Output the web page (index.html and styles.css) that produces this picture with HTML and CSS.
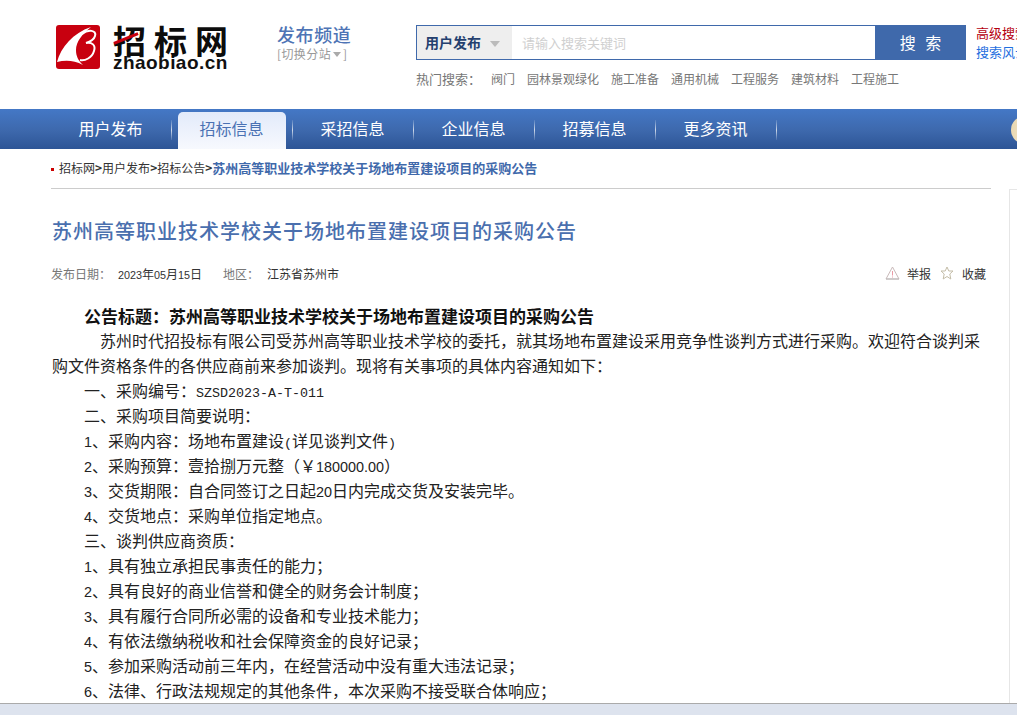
FILE: index.html
```html
<!DOCTYPE html>
<html lang="zh-CN">
<head>
<meta charset="UTF-8">
<title>苏州高等职业技术学校关于场地布置建设项目的采购公告</title>
<link rel="stylesheet" href="styles.css">
</head>
<body>
<div class="page">
  <header class="top">
    <div class="logo">
      <svg class="logoMark" width="44" height="44" viewBox="0 0 44 44">
        <rect width="44" height="44" rx="3" fill="#c8000f"/>
        <path d="M1 37C5 22 17 8 35 2C26 9 20 17 20 25C20 31 22 35 27 40C18 35 9 35 1 37Z" fill="#fff"/>
        <path d="M26 9C32 4 41 5 39 11C38 15 33 17 30 18C36 17 40 20 38 26C36 33 29 36 24 35" fill="none" stroke="#fff" stroke-width="2"/>
      </svg>
      <div class="logoText">
        <div class="logoCn">招标网<i class="logoSlash"></i></div>
        <div class="logoEn">zhaobiao.cn</div>
      </div>
    </div>
    <div class="channel">
      <div class="channelName">发布频道</div>
      <div class="channelSwitch">[切换分站<i class="arrow"></i>]</div>
    </div>
    <div class="searchCol">
      <div class="searchBox">
        <div class="searchType">用户发布<i class="arrow typeArrow"></i></div>
        <div class="searchInput">请输入搜索关键词</div>
        <div class="searchBtn">搜 索</div>
      </div>
      <div class="hot">
        <span class="hotLabel">热门搜索：</span>
        <a>阀门</a><a>园林景观绿化</a><a>施工准备</a><a>通用机械</a><a>工程服务</a><a>建筑材料</a><a>工程施工</a>
      </div>
    </div>
    <div class="advLinks">
      <a class="advRed">高级搜索</a>
      <a class="advBlue">搜索风云</a>
    </div>
  </header>

  <nav class="nav">
    <a class="navItem">用户发布</a>
    <a class="navItem active">招标信息</a>
    <a class="navItem">采招信息</a>
    <a class="navItem">企业信息</a>
    <a class="navItem">招募信息</a>
    <a class="navItem">更多资讯</a>
    <i class="navBall"></i>
  </nav>

  <div class="mainWrap">
    <main class="main">
      <div class="crumb">
        <i class="crumbDot"></i>招标网<em>&gt;</em>用户发布<em>&gt;</em>招标公告<em>&gt;</em><b>苏州高等职业技术学校关于场地布置建设项目的采购公告</b>
      </div>
      <h1 class="title">苏州高等职业技术学校关于场地布置建设项目的采购公告</h1>
      <div class="meta">
        <span class="metaLabel">发布日期：</span><span class="metaDate"><span class="numSm">2023</span>年<span class="numSm">05</span>月<span class="numSm">15</span>日</span>
        <span class="metaLabel metaArea">地区：</span><span class="metaCity">江苏省苏州市</span>
        <span class="tools">
          <svg width="15" height="14" viewBox="0 0 15 14"><path d="M7.500 1L14 13H1Z" fill="#fff" stroke="#c9b9b9"/><path d="M7.500 5V9.500M7.500 10.500V11.500" stroke="#eb9ba5"/><path d="M1 13H14" stroke="#bbb"/></svg>
          <a class="toolReport">举报</a>
          <svg width="14" height="14" viewBox="0 0 14 14"><path d="M7 1L8.800 5H13L9.800 8L10.800 13L7 10.500L3.200 13L4.200 8L1 5H5.200Z" fill="#fff" stroke="#c4bda8"/></svg>
          <a class="toolFav">收藏</a>
        </span>
      </div>
      <article class="article">
        <p class="line subject">公告标题：苏州高等职业技术学校关于场地布置建设项目的采购公告</p>
        <p class="line intro">苏州时代招投标有限公司受苏州高等职业技术学校的委托，就其场地布置建设采用竞争性谈判方式进行采购。欢迎符合谈判采购文件资格条件的各供应商前来参加谈判。现将有关事项的具体内容通知如下：</p>
        <p class="line">一、采购编号：<span class="mono">SZSD2023-A-T-011</span></p>
        <p class="line">二、采购项目简要说明：</p>
        <p class="line"><span class="num">1</span>、采购内容：场地布置建设<span class="mono">(</span>详见谈判文件<span class="mono">)</span></p>
        <p class="line"><span class="num">2</span>、采购预算：壹拾捌万元整（￥<span class="num">180000.00</span>）</p>
        <p class="line"><span class="num">3</span>、交货期限：自合同签订之日起<span class="num">20</span>日内完成交货及安装完毕。</p>
        <p class="line"><span class="num">4</span>、交货地点：采购单位指定地点。</p>
        <p class="line">三、谈判供应商资质：</p>
        <p class="line"><span class="num">1</span>、具有独立承担民事责任的能力；</p>
        <p class="line"><span class="num">2</span>、具有良好的商业信誉和健全的财务会计制度；</p>
        <p class="line"><span class="num">3</span>、具有履行合同所必需的设备和专业技术能力；</p>
        <p class="line"><span class="num">4</span>、有依法缴纳税收和社会保障资金的良好记录；</p>
        <p class="line"><span class="num">5</span>、参加采购活动前三年内，在经营活动中没有重大违法记录；</p>
        <p class="line"><span class="num">6</span>、法律、行政法规规定的其他条件，本次采购不接受联合体响应；</p>
      </article>
    </main>
    <aside class="side"></aside>
  </div>
</div>
<div class="bottomBar"></div>
</body>
</html>
```

FILE: styles.css
```css
html, body { margin: 0; height: 715px; overflow: hidden; background: #fff; }
body { font-family: "Noto Sans CJK SC", "Liberation Sans", sans-serif; color: #333; font-size: 12px; }
a { text-decoration: none; color: inherit; }
i, em { font-style: normal; }
.page { width: 1017px; height: 715px; overflow: hidden; }

/* header */
.top { display: flex; height: 109px; box-sizing: border-box; padding: 25px 0 0 56px; white-space: nowrap; }
.top > div { flex: none; }
.logo { display: flex; gap: 13px; width: 221px; }
.logoMark { display: block; flex: none; }
.logoText { width: 116px; }
.logoCn { position: relative; font-size: 33px; font-weight: 700; line-height: 30px; height: 30px; letter-spacing: 8px; color: #0c0c0c; }
.logoSlash { position: absolute; left: 0; top: 12px; width: 26px; height: 3px; background: #c8000f; transform: rotate(-22deg); }
.logoEn { font-family: "Liberation Sans", sans-serif; font-size: 19px; font-weight: 700; line-height: 15px; color: #111; letter-spacing: .45px; }
.channel { width: 139px; margin-top: -2px; }
.channelName { font-size: 18px; line-height: 22px; font-weight: 500; letter-spacing: .6px; color: #4e74b5; }
.channelSwitch { margin-top: 2px; font-size: 12px; line-height: 14px; letter-spacing: .4px; color: #999; }
.arrow { display: inline-block; width: 0; height: 0; border: 4px solid transparent; border-top: 5px solid #aaa; border-bottom: 0; margin: 0 2px 2px 2px; }
.searchCol { width: 550px; }
.searchBox { display: flex; height: 35px; box-sizing: border-box; border: 1px solid #3f69ab; }
.searchType { width: 95px; background: #eee; font-size: 14px; font-weight: 700; line-height: 33px; padding-left: 8px; box-sizing: border-box; color: #24406f; flex: none; }
.typeArrow { border: 5px solid transparent; border-top: 6px solid #bbb; border-bottom: 0; margin: 0 0 0 9px; vertical-align: middle; }
.searchInput { flex: 1; padding-left: 10px; font-size: 13px; line-height: 34px; color: #d0d0d0; }
.searchBtn { width: 91px; margin: -1px -1px -1px 0; background: #3f69ab; color: #fff; font-size: 16px; line-height: 35px; text-align: center; word-spacing: 6px; flex: none; }
.hot { display: flex; gap: 12px; margin-top: 10px; line-height: 18px; color: #777; }
.hotLabel { font-size: 13px; margin-right: -2px; }
.advLinks { display: flex; flex-direction: column; margin: -2px 0 0 10px; font-size: 13px; line-height: 19px; }
.advRed { color: #b5000f; }
.advBlue { color: #1f6fe0; }

/* nav */
.nav { position: relative; display: flex; height: 40px; box-sizing: border-box; padding-left: 51px; background: linear-gradient(#4478c6, #3d68ac 55%, #2d5596); }
.navItem { position: relative; z-index: 1; width: 121px; box-sizing: border-box; padding-right: 2px; color: #fff; font-size: 16px; line-height: 38px; text-align: center; }
.navItem::after { content: ""; position: absolute; right: 0; top: 11px; width: 1px; height: 20px; background: linear-gradient(rgba(255,255,255,.1), rgba(255,255,255,.75), rgba(255,255,255,.1)); }
.navItem.active { color: #4a71b3; }
.navItem.active::before { content: ""; position: absolute; z-index: -1; left: 6px; right: 7px; top: 3px; bottom: 0; border-radius: 5px 5px 0 0; background: linear-gradient(#e2eafa, #f7f9fe); }
.navBall { position: absolute; left: 1011px; top: 7px; width: 28px; height: 28px; border-radius: 50%; background: linear-gradient(100deg, #e8d6ae, #f6efdd); }

/* main */
.mainWrap { display: flex; padding-left: 51px; }
.main { width: 940px; flex: none; }
.side { width: 8px; height: 540px; margin: 40px 0 0 18px; border-top: 1px solid #e6e6e6; border-left: 1px solid #e6e6e6; }
.crumb { height: 39px; line-height: 37px; border-bottom: 1px solid #ccc; color: #333; white-space: nowrap; }
.crumb b { font-size: 13px; color: #3f69ab; }
.crumb em { font-weight: 700; }
.crumbDot { display: inline-block; width: 3px; height: 3px; background: #c00; margin-right: 5px; vertical-align: middle; }
.title { margin: 28px 0 0 1px; font-size: 20px; line-height: 28px; font-weight: 500; letter-spacing: 1px; color: #4a6fae; white-space: nowrap; }
.meta { display: flex; align-items: center; height: 18px; margin-top: 19px; white-space: nowrap; }
.metaLabel { color: #777; width: 67px; }
.metaDate { width: 105px; color: #333; }
.numSm { font-family: "Liberation Sans", sans-serif; font-size: 10.8px; line-height: 0; }
.metaArea { width: 44px; }
.metaCity { color: #333; }
.tools { display: flex; align-items: center; margin-left: auto; margin-right: 5px; }
.toolReport { margin: 0 9px 0 7px; }
.toolFav { margin-left: 8px; }
.article { margin: 21px 0 0 1px; width: 936px; }
.line { margin: 0; font-size: 16px; line-height: 25px; color: #222; text-indent: 32px; }
.subject { font-size: 17px; font-weight: 700; color: #111; }
.intro { text-indent: 48px; }
.mono { font-family: "Liberation Mono", monospace; font-size: 13.33px; line-height: 0; }
.num { font-family: "Liberation Sans", sans-serif; font-size: 14.4px; line-height: 0; }

.bottomBar { position: fixed; left: 0; right: 0; bottom: 0; height: 11px; background: #dde3ee; border-top: 1px solid #aaa; }
```
